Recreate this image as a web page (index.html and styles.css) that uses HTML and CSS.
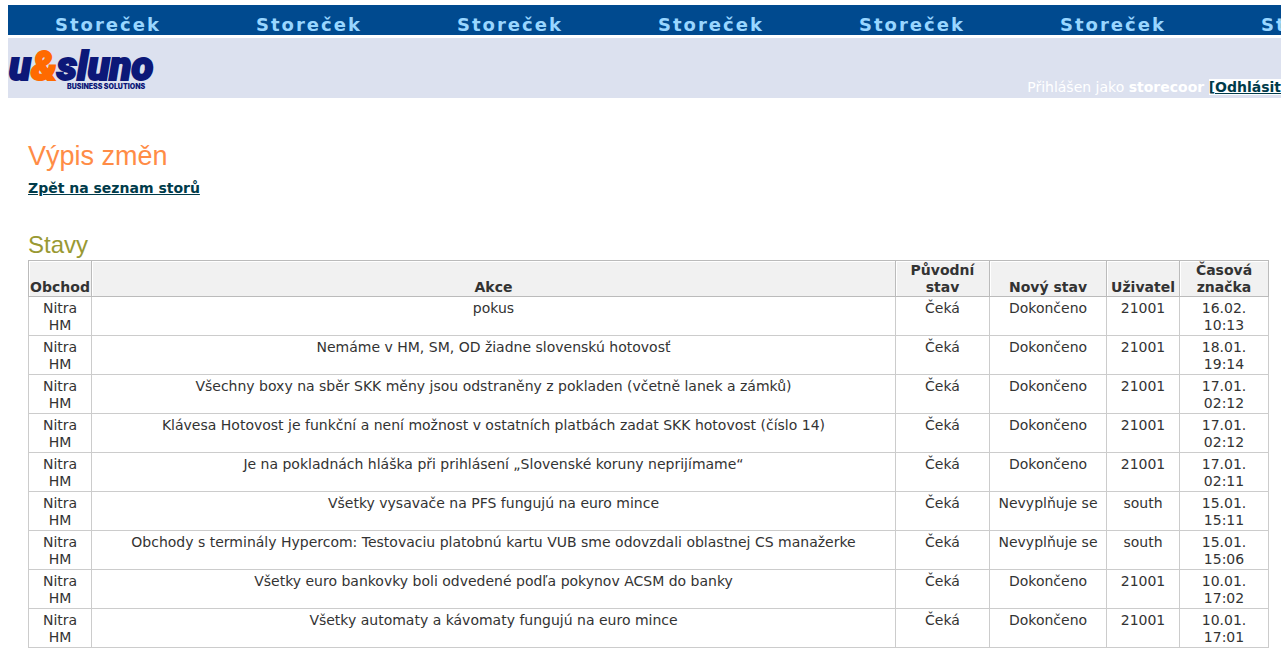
FILE: index.html
```html
<!DOCTYPE html>
<html lang="cs">
<head>
<meta charset="utf-8">
<title>Storeček – Výpis změn</title>
<link rel="stylesheet" href="styles.css">
</head>
<body>
<div class="banner">
  <span>Storeček</span><span>Storeček</span><span>Storeček</span><span>Storeček</span><span>Storeček</span><span>Storeček</span><span>Storeček</span>
</div>
<header class="header">
  <svg class="logo" width="150" height="60" viewBox="0 0 150 60" role="img" aria-label="u&amp;sluno Business Solutions">
    <text class="logo-name" x="1" y="42">u<tspan class="logo-amp">&amp;</tspan>sluno</text>
    <text class="logo-tag" x="59" y="51">BUSINESS SOLUTIONS</text>
  </svg>
  <p class="login">Přihlášen jako <strong>storecoor</strong> <a class="logout" href="#">[Odhlásit</a></p>
</header>
<main class="content">
  <h1 class="title">Výpis změn</h1>
  <a class="back" href="#">Zpět na seznam storů</a>
  <h2 class="subtitle">Stavy</h2>
  <table class="log">
    <colgroup><col class="c-shop"><col><col class="c-old"><col class="c-new"><col class="c-user"><col class="c-time"></colgroup>
    <thead>
      <tr><th scope="col">Obchod</th><th scope="col">Akce</th><th scope="col">Původní stav</th><th scope="col">Nový stav</th><th scope="col">Uživatel</th><th scope="col">Časová značka</th></tr>
    </thead>
    <tbody>
      <tr><td>Nitra HM</td><td>pokus</td><td>Čeká</td><td>Dokončeno</td><td>21001</td><td>16.02. 10:13</td></tr>
      <tr><td>Nitra HM</td><td>Nemáme v HM, SM, OD žiadne slovenskú hotovosť</td><td>Čeká</td><td>Dokončeno</td><td>21001</td><td>18.01. 19:14</td></tr>
      <tr><td>Nitra HM</td><td>Všechny boxy na sběr SKK měny jsou odstraněny z pokladen (včetně lanek a zámků)</td><td>Čeká</td><td>Dokončeno</td><td>21001</td><td>17.01. 02:12</td></tr>
      <tr><td>Nitra HM</td><td>Klávesa Hotovost je funkční a není možnost v ostatních platbách zadat SKK hotovost (číslo 14)</td><td>Čeká</td><td>Dokončeno</td><td>21001</td><td>17.01. 02:12</td></tr>
      <tr><td>Nitra HM</td><td>Je na pokladnách hláška při prihlásení „Slovenské koruny neprijímame“</td><td>Čeká</td><td>Dokončeno</td><td>21001</td><td>17.01. 02:11</td></tr>
      <tr><td>Nitra HM</td><td>Všetky vysavače na PFS fungujú na euro mince</td><td>Čeká</td><td>Nevyplňuje se</td><td>south</td><td>15.01. 15:11</td></tr>
      <tr><td>Nitra HM</td><td>Obchody s terminály Hypercom: Testovaciu platobnú kartu VUB sme odovzdali oblastnej CS manažerke</td><td>Čeká</td><td>Nevyplňuje se</td><td>south</td><td>15.01. 15:06</td></tr>
      <tr><td>Nitra HM</td><td>Všetky euro bankovky boli odvedené podľa pokynov ACSM do banky</td><td>Čeká</td><td>Dokončeno</td><td>21001</td><td>10.01. 17:02</td></tr>
      <tr><td>Nitra HM</td><td>Všetky automaty a kávomaty fungujú na euro mince</td><td>Čeká</td><td>Dokončeno</td><td>21001</td><td>10.01. 17:01</td></tr>
    </tbody>
  </table>
</main>
</body>
</html>
```
FILE: styles.css
```css
body {
  margin: 5px 0 0 8px;
  background: #fff;
  color: #333;
  font: 14px/17px Verdana, "DejaVu Sans", sans-serif;
}
.banner {
  display: flex;
  overflow: hidden;
  height: 30px;
  margin-bottom: 3px;
  background: #004a8f;
  color: #99d6ff;
  font-size: 18px;
  font-weight: bold;
  line-height: 40px;
  letter-spacing: 2px;
}
.banner span {
  flex: 0 0 201px;
  box-sizing: border-box;
  padding-left: 47px;
}
.header {
  display: flex;
  justify-content: space-between;
  align-items: flex-end;
  background: #dce1ef;
}
.logo { display: block; }
.logo-name {
  font: italic 900 40px Roboto, sans-serif;
  fill: #0c1878;
  stroke: #0c1878;
  stroke-width: 2px;
}
.logo-amp { fill: #ff6a00; stroke: #ff6a00; }
.logo-tag { font: 900 7px Inter, sans-serif; fill: #0c1878; }
.login {
  margin: 0;
  padding-bottom: 2px;
  color: #fff;
  white-space: nowrap;
}
a { color: #003b4a; font-weight: bold; }
.logout { background: #fff; }
.content { padding: 42px 12px 0 20px; }
.title, .subtitle {
  margin: 0;
  font-family: "Liberation Sans", Arial, sans-serif;
  font-weight: normal;
}
.title {
  margin-bottom: 8px;
  color: #ff8c46;
  font-size: 27px;
  line-height: 32px;
}
.subtitle {
  margin-top: 34px;
  color: #993;
  font-size: 24px;
  line-height: 28px;
}
.log {
  width: 100%;
  margin-top: 1px;
  table-layout: fixed;
  border-collapse: collapse;
  text-align: center;
}
.log th, .log td { border: 1px solid #ccc; }
.log th {
  padding: 1px 0 0;
  border-color: #bbb;
  background: #f1f1f1;
  box-shadow: inset 1px 1px #fff;
  vertical-align: bottom;
}
.log td { padding: 3px 9px 1px; vertical-align: top; }
.log td:nth-child(4) { padding: 3px 0 1px; }
.c-shop { width: 63px; }
.c-old { width: 94px; }
.c-new { width: 117px; }
.c-user { width: 73px; }
.c-time { width: 89px; }
```
